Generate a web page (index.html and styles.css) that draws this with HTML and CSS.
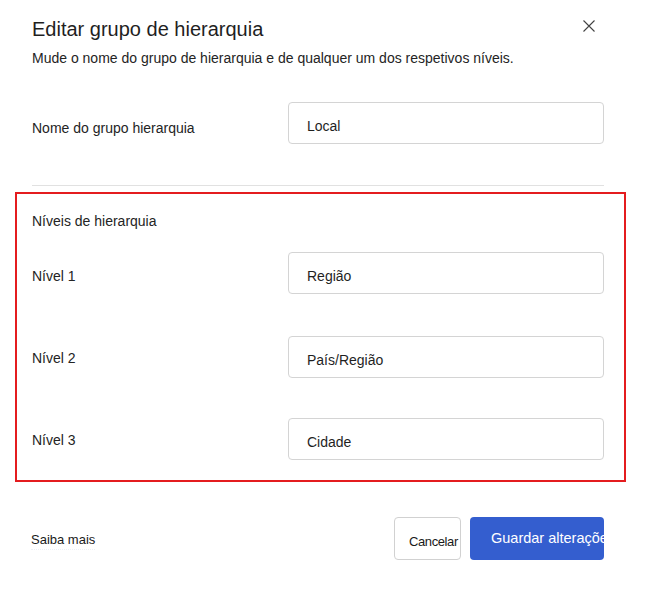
FILE: index.html
```html
<!DOCTYPE html>
<html lang="pt">
<head>
<meta charset="utf-8">
<title>Editar grupo de hierarquia</title>
<link rel="stylesheet" href="styles.css">
</head>
<body>
<div class="dialog">
  <header class="dialog-header">
    <h1 class="title">Editar grupo de hierarquia</h1>
    <button class="close" type="button" aria-label="Fechar">
      <svg width="12" height="12" viewBox="0 0 12 12" aria-hidden="true">
        <path d="M0.5 0.5 L11.5 11.5 M11.5 0.5 L0.5 11.5" stroke="#424242" stroke-width="1.1" fill="none"/>
      </svg>
    </button>
  </header>
  <p class="subtitle">Mude o nome do grupo de hierarquia e de qualquer um dos respetivos níveis.</p>

  <div class="field-row row-name">
    <label class="field-label" for="grp">Nome do grupo hierarquia</label>
    <input class="field-input" id="grp" type="text" value="Local">
  </div>

  <hr class="divider">

  <section class="levels">
    <h2 class="levels-title">Níveis de hierarquia</h2>
    <div class="levels-list">
      <div class="field-row row-l1">
        <label class="field-label" for="n1">Nível 1</label>
        <input class="field-input" id="n1" type="text" value="Região">
      </div>
      <div class="field-row row-l2">
        <label class="field-label" for="n2">Nível 2</label>
        <input class="field-input" id="n2" type="text" value="País/Região">
      </div>
      <div class="field-row row-l3">
        <label class="field-label" for="n3">Nível 3</label>
        <input class="field-input" id="n3" type="text" value="Cidade">
      </div>
    </div>
  </section>

  <footer class="footer">
    <a class="learn-more" href="#">Saiba mais</a>
    <div class="actions">
      <button class="btn btn-secondary" type="button">Cancelar</button>
      <button class="btn btn-primary" type="button">Guardar alterações</button>
    </div>
  </footer>
</div>
</body>
</html>
```

FILE: styles.css
```css
* { box-sizing: border-box; }

html, body {
  margin: 0;
  padding: 0;
  background: #ffffff;
}

body {
  font-family: "Liberation Sans", Arial, sans-serif;
  color: #242424;
  width: 645px;
  height: 596px;
  overflow: hidden;
}

.dialog {
  padding: 15px 41px 0 32px;
}

.dialog-header {
  display: flex;
  justify-content: space-between;
  align-items: flex-start;
  height: 28px;
}

.title {
  margin: 0;
  font-size: 20px;
  line-height: 28px;
  font-weight: 400;
  color: #1f1f1f;
}

.close {
  width: 24px;
  height: 24px;
  margin: -1px 3px 0 0;
  padding: 0;
  border: none;
  background: transparent;
  display: flex;
  align-items: center;
  justify-content: center;
}

.subtitle {
  margin: 5px 0 0;
  font-size: 14px;
  line-height: 20px;
  color: #242424;
}

.field-row {
  display: grid;
  grid-template-columns: 1fr 316px;
  align-items: start;
  height: 42px;
}

.field-label {
  font-size: 14px;
  line-height: 20px;
  color: #242424;
}

.row-name { margin-top: 34px; }
.row-name .field-label { padding-top: 16px; }
.row-l1 .field-label { padding-top: 14px; }
.row-l2 .field-label { padding-top: 12px; }
.row-l3 .field-label { padding-top: 12px; }

.field-input {
  width: 316px;
  height: 42px;
  margin: 0;
  padding: 5px 10px 0 18px;
  border: 1px solid #d4d4d4;
  border-radius: 4px;
  background: #ffffff;
  font-family: "Liberation Sans", Arial, sans-serif;
  font-size: 14px;
  color: #1f1f1f;
  outline: none;
}

.divider {
  margin: 41px 0 0;
  border: none;
  border-top: 1px solid #e1e1e1;
  height: 0;
}

.levels {
  margin: 6px -22px 0 -17px;
  padding: 17px 20px 20px 15px;
  border: 2px solid #e41c1f;
}

.levels-title {
  margin: 0;
  font-size: 14px;
  line-height: 20px;
  font-weight: 400;
  color: #242424;
}

.levels-list {
  margin-top: 21px;
  display: flex;
  flex-direction: column;
}

.row-l2 { margin-top: 42px; }
.row-l3 { margin-top: 40px; }

.footer {
  margin-top: 35px;
  display: flex;
  justify-content: space-between;
  align-items: flex-start;
}

.learn-more {
  margin-top: 14px;
  margin-left: -1px;
  font-size: 13px;
  line-height: 18px;
  color: #1a1a1a;
  text-decoration: none;
  border-bottom: 1px dotted #eef1f7;
}

.actions {
  display: flex;
  gap: 9px;
}

.btn {
  height: 43px;
  margin: 0;
  border-radius: 4px;
  font-family: "Liberation Sans", Arial, sans-serif;
  white-space: nowrap;
  overflow: hidden;
  text-align: left;
  cursor: pointer;
}

.btn-secondary {
  width: 67px;
  padding: 6px 0 0 14px;
  border: 1px solid #d1d1d1;
  background: #ffffff;
  color: #1a1a1a;
  font-size: 13px;
  letter-spacing: -0.4px;
}

.btn-primary {
  width: 134px;
  padding: 0 0 1px 21px;
  border: none;
  background: #345ecf;
  color: #ffffff;
  font-size: 14.5px;
}
```
